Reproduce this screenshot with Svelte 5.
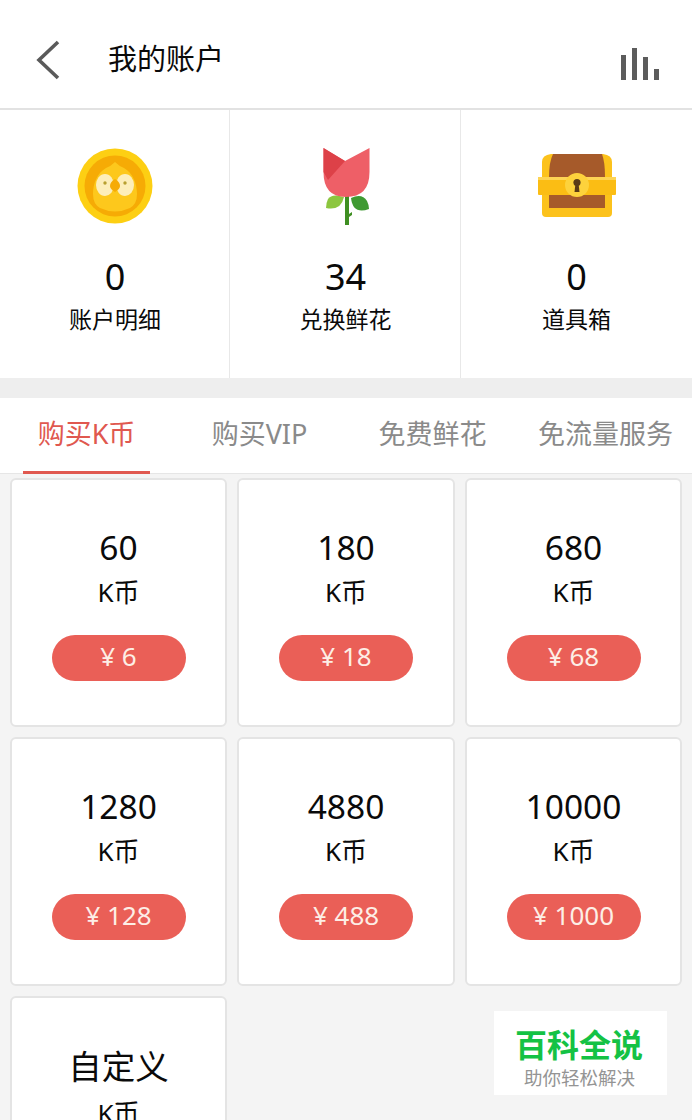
<script>
  const stats = [
    { value: "0", label: "账户明细", icon: "coin" },
    { value: "34", label: "兑换鲜花", icon: "flower" },
    { value: "0", label: "道具箱", icon: "chest" }
  ];

  const tabs = ["购买K币", "购买VIP", "免费鲜花", "免流量服务"];
  let activeTab = tabs[0];

  const packs = [
    { coins: "60", price: "6" },
    { coins: "180", price: "18" },
    { coins: "680", price: "68" },
    { coins: "1280", price: "128" },
    { coins: "4880", price: "488" },
    { coins: "10000", price: "1000" }
  ];
</script>

<div class="page">
  <header class="topbar">
    <svg class="back" width="26" height="40" viewBox="0 0 26 40">
      <path d="M23 2 L4 20 L23 38" fill="none" stroke="#5a5a5a" stroke-width="3.6" />
    </svg>
    <h1>我的账户</h1>
    <svg class="bars" width="39" height="32" viewBox="0 0 39 32">
      <rect x="0" y="7" width="5" height="25" fill="#5c5c5c" />
      <rect x="11" y="0" width="5" height="32" fill="#5c5c5c" />
      <rect x="22" y="9" width="5" height="23" fill="#5c5c5c" />
      <rect x="33" y="21" width="5" height="11" fill="#5c5c5c" />
    </svg>
  </header>

  <section class="stats">
    {#each stats as stat}
      <div class="stat">
        <div class="icon">
          {#if stat.icon === "coin"}
            <svg width="76" height="76" viewBox="0 0 76 76">
              <circle cx="38" cy="38" r="37.5" fill="#fdcf13" />
              <circle cx="38" cy="38" r="30.5" fill="#f6ab05" />
              <path d="M38 14 Q42 18 47 20 C56 25 60 36 60 46 Q60 56 53 60 Q38 67 23 60 Q16 56 16 46 C16 36 20 25 29 20 Q34 18 38 14 Z" fill="#fdc81c" />
              <ellipse cx="28" cy="37" rx="9" ry="11" fill="#fdeeba" />
              <ellipse cx="48" cy="37" rx="9" ry="11" fill="#fdeeba" />
              <circle cx="28" cy="35" r="1.7" fill="#b8a030" />
              <circle cx="48" cy="35" r="1.7" fill="#b8a030" />
              <path d="M38 31 Q43 34 43 38 Q43 41 38 44 Q33 41 33 38 Q33 34 38 31 Z" fill="#f6ab05" />
            </svg>
          {:else if stat.icon === "flower"}
            <svg width="50" height="80" viewBox="0 0 50 80">
              <path d="M24 50 L28 50 L28 79 L24 79 Z" fill="#3f8f22" />
              <path d="M28 68 L31 66 L31 69 L28 71 Z" fill="#3f8f22" />
              <path d="M23 51 Q11 47 7 53 Q5 57 5 62 Q20 65 23 51 Z" fill="#8cc63f" />
              <path d="M30 52 Q41 47 46 55 Q48 59 48 63 Q32 69 30 52 Z" fill="#3f9a32" />
              <path d="M2.5 2 L24 15 L48.5 2 L48.5 26 Q48.5 51 25 51 Q2.5 51 2.5 26 Z" fill="#ee5f67" />
              <path d="M2.5 2 L24 15 L7 34 L2.5 26 Z" fill="#dd4148" />
            </svg>
          {:else}
            <svg width="78" height="64" viewBox="0 0 78 64">
              <path d="M4 8 Q4 1 13 0 L65 0 Q74 1 74 8 L74 59 Q74 63 70 63 L8 63 Q4 63 4 59 Z" fill="#fcc21c" />
              <path d="M15 0 L64 0 Q67 8 67 23 L67 54 L11 54 L11 23 Q11 8 15 0 Z" fill="#a65a2a" />
              <rect x="0" y="23" width="78" height="18" rx="1" fill="#fbbd14" />
              <rect x="0" y="23" width="78" height="3" fill="#fdd454" />
              <circle cx="39" cy="31" r="12" fill="#fdd23c" />
              <circle cx="39" cy="28.5" r="3.6" fill="#5a3a16" />
              <path d="M37.5 29 L40.5 29 L41.5 38 L36.5 38 Z" fill="#5a3a16" />
            </svg>
          {/if}
        </div>
        <div class="value">{stat.value}</div>
        <div class="label">{stat.label}</div>
      </div>
    {/each}
  </section>

  <nav class="tabs">
    {#each tabs as tab}
      <button class="tab" class:active={tab === activeTab} on:click={() => (activeTab = tab)}>
        <span>{tab}</span>
      </button>
    {/each}
  </nav>

  <section class="grid">
    {#each packs as pack}
      <div class="card">
        <div class="coins">{pack.coins}</div>
        <div class="unit">K币</div>
        <div class="price">¥ {pack.price}</div>
      </div>
    {/each}
    <div class="card">
      <div class="custom">自定义</div>
      <div class="unit">K币</div>
    </div>
  </section>

  <!-- watermark sits over the list -->
  <div class="mark">
    <div class="mark-title">百科全说</div>
    <div class="mark-sub">助你轻松解决</div>
  </div>
</div>

<style>
  :global(body) {
    background: #fff;
  }

  .page {
    position: relative;
    width: 692px;
    height: 1120px;
    overflow: hidden;
    background: #f4f4f4;
    font-family: "Noto Sans", "Noto Sans CJK SC", sans-serif;
    color: #0a0a0a;
  }

  .topbar {
    display: flex;
    align-items: center;
    height: 110px;
    box-sizing: border-box;
    padding: 0 32px 0 35px;
    background: #fff;
    border-bottom: 2px solid #e2e2e2;
  }

  .back {
    margin-top: 11px;
  }

  h1 {
    margin: 10px 0 0 47px;
    flex: 1;
    font-size: 29px;
    font-weight: 400;
    line-height: 40px;
  }

  .bars {
    margin-top: 20px;
  }

  .stats {
    display: grid;
    grid-template-columns: 230px 231px 231px;
    height: 268px;
    background: #fff;
    border-bottom: 20px solid #eeeeee;
  }

  .stat {
    display: flex;
    flex-direction: column;
    align-items: center;
    padding-left: 1px;
    border-right: 1px solid #e8e8e8;
  }

  .stat:last-child {
    padding-left: 0;
    border-right: none;
  }

  .icon {
    height: 76px;
    margin-top: 38px;
    display: flex;
    align-items: center;
    justify-content: center;
  }

  .value {
    margin-top: 29px;
    font-size: 36px;
    line-height: 48px;
  }

  .label {
    margin-top: 1px;
    font-size: 23px;
    line-height: 34px;
  }

  .tabs {
    display: grid;
    grid-template-columns: repeat(4, 1fr);
    height: 75px;
    background: #fff;
    border-bottom: 1px solid #e6e6e6;
  }

  .tab {
    display: flex;
    justify-content: center;
    padding: 16px 0 0;
    border: none;
    background: none;
    font: inherit;
    font-size: 27px;
    line-height: 40px;
    color: #8a8a8a;
    white-space: nowrap;
    position: relative;
  }

  .tab.active {
    color: #e0584f;
  }

  .tab.active::after {
    content: "";
    position: absolute;
    left: 23px;
    width: 127px;
    bottom: -1px;
    height: 3px;
    background: #e0584f;
  }

  .grid {
    display: grid;
    grid-template-columns: 217px 218px 217px;
    grid-auto-rows: 249px;
    column-gap: 10px;
    row-gap: 10px;
    padding: 4px 0 0 10px;
  }

  .card {
    box-sizing: border-box;
    display: flex;
    flex-direction: column;
    align-items: center;
    background: #fff;
    border: 2px solid #e4e4e4;
    border-radius: 6px;
  }

  .coins {
    margin-top: 45px;
    font-size: 33.5px;
    line-height: 44px;
  }

  .custom {
    margin-top: 44px;
    font-size: 33.5px;
    line-height: 48px;
  }

  .unit {
    margin-top: 5px;
    font-size: 26px;
    line-height: 36px;
  }

  .price {
    width: 134px;
    height: 46px;
    margin-top: 25px;
    border-radius: 23px;
    background: #ea5f57;
    color: #fdeee6;
    font-size: 26px;
    line-height: 43px;
    text-align: center;
  }

  .mark {
    position: absolute;
    left: 494px;
    top: 1011px;
    width: 173px;
    height: 84px;
    background: #fff;
    text-align: center;
  }

  .mark-title {
    margin-top: 13px;
    padding-right: 3px;
    font-size: 32px;
    font-weight: 700;
    line-height: 42px;
    color: #14c244;
  }

  .mark-sub {
    padding-right: 2px;
    font-size: 18.5px;
    line-height: 24px;
    color: #949494;
  }
</style>
